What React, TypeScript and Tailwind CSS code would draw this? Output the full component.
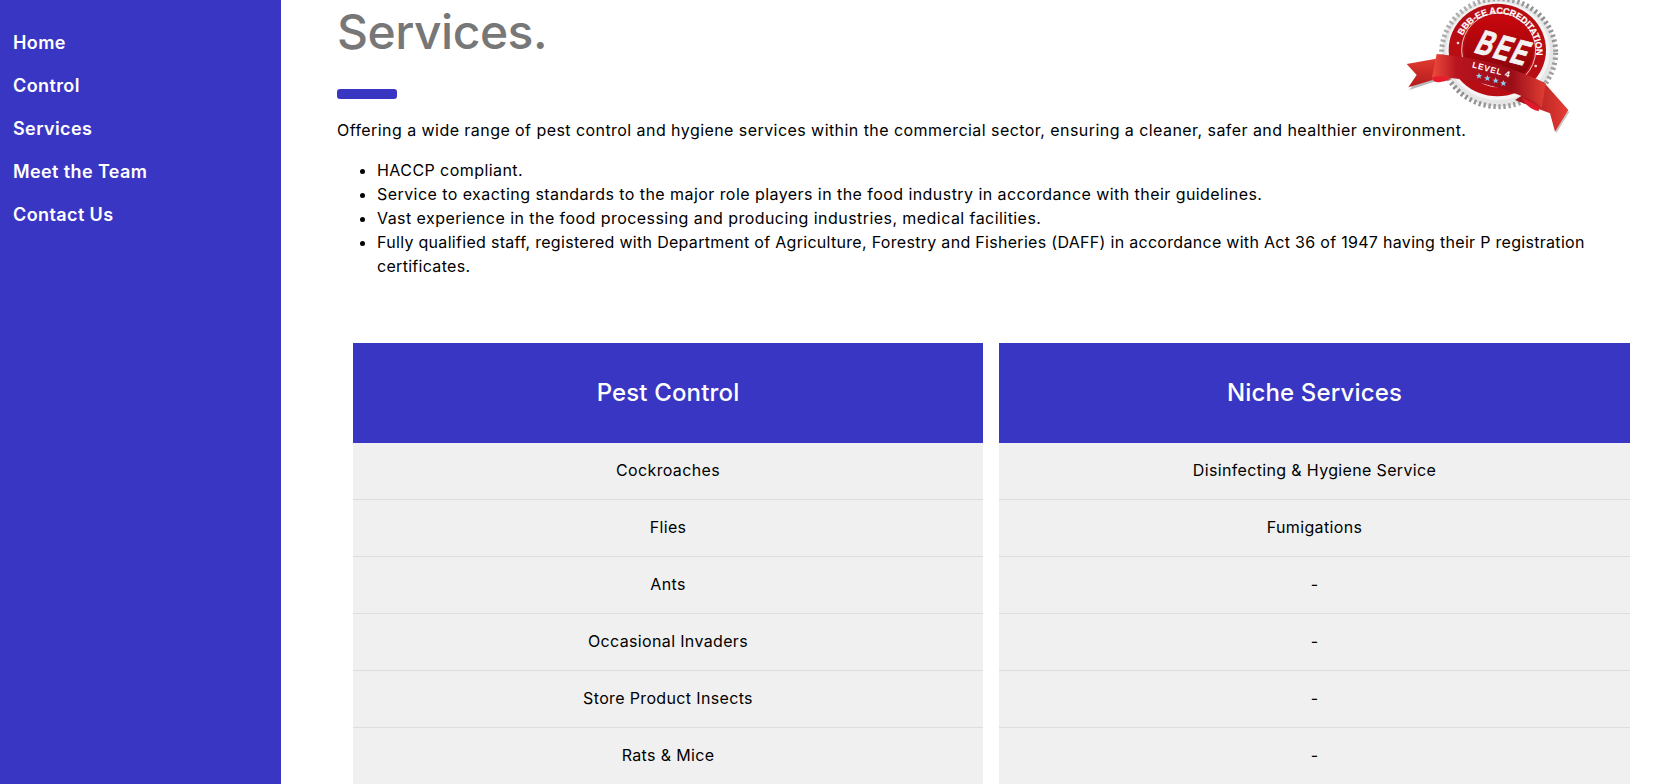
const navItems = ['Home', 'Control', 'Services', 'Meet the Team', 'Contact Us'];

const bullets = [
  { text: 'HACCP compliant.', cls: 'tracking-[0.44px]' },
  { text: 'Service to exacting standards to the major role players in the food industry in accordance with their guidelines.', cls: 'tracking-[0.44px]' },
  { text: 'Vast experience in the food processing and producing industries, medical facilities.', cls: 'tracking-[0.44px]' },
  { text: 'Fully qualified staff, registered with Department of Agriculture, Forestry and Fisheries (DAFF) in accordance with Act 36 of 1947 having their P registration certificates.', cls: 'tracking-[0.3px]' },
];

const columns = [
  { title: 'Pest Control', rows: ['Cockroaches', 'Flies', 'Ants', 'Occasional Invaders', 'Store Product Insects', 'Rats & Mice'] },
  { title: 'Niche Services', rows: ['Disinfecting & Hygiene Service', 'Fumigations', '-', '-', '-', '-'] },
];

function Star({ x, y }: { x: number; y: number }) {
  return (
    <polygon
      transform={`translate(${x} ${y}) scale(10)`}
      points="0,-1 0.28,-0.31 0.95,-0.31 0.4,0.12 0.59,0.81 0,0.4 -0.59,0.81 -0.4,0.12 -0.95,-0.31 -0.28,-0.31"
      fill="#8fd0f0"
    />
  );
}

function BeeBadge() {
  return (
    <svg viewBox="0 0 660 435" className="absolute left-[1380px] top-0 h-[145px] w-[220px]">
      <defs>
        <linearGradient id="silver" x1="0" y1="0" x2="1" y2="1">
          <stop offset="0" stopColor="#bdbdbd" />
          <stop offset="0.5" stopColor="#8c8c8c" />
          <stop offset="1" stopColor="#a8a8a8" />
        </linearGradient>
        <linearGradient id="disc" x1="0" y1="0" x2="0" y2="1">
          <stop offset="0" stopColor="#c9060d" />
          <stop offset="0.55" stopColor="#a5060c" />
          <stop offset="1" stopColor="#6e0208" />
        </linearGradient>
        <linearGradient id="band" x1="0" y1="0" x2="1" y2="0">
          <stop offset="0" stopColor="#ee4c3d" />
          <stop offset="0.22" stopColor="#b8141f" />
          <stop offset="0.7" stopColor="#9a0d19" />
          <stop offset="1" stopColor="#e23e33" />
        </linearGradient>
        <linearGradient id="tail" x1="0" y1="0" x2="1" y2="0">
          <stop offset="0" stopColor="#9c1019" />
          <stop offset="1" stopColor="#e53e33" />
        </linearGradient>
        <linearGradient id="tailLeft" x1="0" y1="0" x2="0" y2="1">
          <stop offset="0" stopColor="#e03a30" />
          <stop offset="1" stopColor="#b31a1c" />
        </linearGradient>
        <path id="arc" d="M 248 107 A 116 116 0 0 1 468 170" fill="none" />
      </defs>

      {/* teeth: a dashed ring, with the pale band inside it */}
      <ellipse cx="356" cy="158" rx="171" ry="162" fill="#e6e6e6" />
      <ellipse cx="356" cy="158" rx="171" ry="162" fill="none" stroke="url(#silver)" strokeWidth="15" strokeDasharray="7 8" />
      <ellipse cx="354" cy="153" rx="155" ry="147" fill="#f4f4f4" />
      <ellipse cx="352" cy="150" rx="146" ry="139" fill="#b90d14" />
      <circle cx="356" cy="150" r="111" fill="none" stroke="#f0c8c8" strokeWidth="3" />
      <circle cx="356" cy="150" r="104" fill="url(#disc)" />

      <text fontFamily="'Liberation Sans', sans-serif" fontWeight="700" fontSize="27" fill="#ffffff" stroke="#ffffff" strokeWidth="0.6">
        <textPath href="#arc" textLength="322" lengthAdjust="spacing">BBB-EE ACCREDITATION</textPath>
      </text>
      <circle cx="234" cy="129" r="4" fill="#f5dede" />
      <circle cx="467" cy="198" r="4" fill="#f5dede" />

      <text
        transform="translate(278 156) rotate(15) skewX(-12) scale(0.9 1.35)"
        fontFamily="'Liberation Sans', sans-serif"
        fontWeight="700"
        fontSize="78"
        fill="#f2f2f2"
        stroke="#f2f2f2"
        strokeWidth="2"
        letterSpacing="7"
      >
        BEE
      </text>

      <polygon points="84,196 170,178 160,246 88,270 118,230" fill="#8a8a8a" opacity="0.6" />
      <polygon points="80,192 168,176 158,240 85,262 110,225" fill="url(#tailLeft)" />
      <polygon points="529,400 569,334 514,345" fill="#8a8a8a" opacity="0.5" />
      <polygon points="490,245 565,330 525,395 510,340 405,300" fill="url(#tail)" />
      <path d="M 170 162 Q 270 170 360 195 Q 440 222 497 250 L 485 325 Q 470 300 380 272 Q 290 240 212 234 Q 180 232 155 236 Z" fill="url(#band)" />
      <path d="M 157 232 Q 185 224 212 236 Q 185 252 160 244 Z" fill="#e81c2c" />
      <path d="M 425 292 Q 455 305 478 322 L 476 334 Q 440 325 425 292 Z" fill="#e01a2a" />

      <text
        transform="translate(275 202) rotate(15)"
        fontFamily="'Liberation Sans', sans-serif"
        fontWeight="700"
        fontSize="25"
        fill="#ffffff"
        letterSpacing="2.5"
      >
        LEVEL 4
      </text>
      <Star x={297} y={228} />
      <Star x={322} y={235} />
      <Star x={347} y={242} />
      <Star x={370} y={250} />
    </svg>
  );
}

export default function App() {
  return (
    <div className="relative flex h-[784px] w-full overflow-hidden bg-white font-['Inter',sans-serif] text-black">
      <aside className="flex w-[281px] shrink-0 flex-col gap-[18px] bg-[#3936c4] px-[13px] pt-[30px]">
        {navItems.map((item) => (
          <a key={item} className="text-[18px] leading-[25px] font-semibold tracking-[0.4px] text-white">
            {item}
          </a>
        ))}
      </aside>

      <main className="flex-1 pl-[56px] pr-[28px]">
        <h1 className="mt-[2px] text-[48px] leading-[60px] font-medium tracking-[-0.5px] text-[#777777]">Services.</h1>
        <div className="mt-[27px] h-[10px] w-[60px] rounded-[3px] bg-[#3936c4]" />
        <p className="mt-[19px] text-[16px] leading-[24px] tracking-[0.44px]">
          Offering a wide range of pest control and hygiene services within the commercial sector, ensuring a cleaner, safer and healthier environment.
        </p>
        <ul className="mt-[16px] list-disc pl-[40px] text-[16px] leading-[24px]">
          {bullets.map((b) => (
            <li key={b.text} className={b.cls}>{b.text}</li>
          ))}
        </ul>

        <div className="mt-[65px] ml-[16px] grid grid-cols-[630px_1fr] gap-[16px]">
          {columns.map((col) => (
            <div key={col.title}>
              <div className="flex h-[100px] items-center justify-center bg-[#3936c4] pb-[1px] text-[24px] font-medium tracking-[0.15px] text-white">
                {col.title}
              </div>
              {col.rows.map((row, i) => (
                <div
                  key={i}
                  className="flex h-[57px] items-center justify-center border-b border-[#dddddd] bg-[#f0f0f0] pb-[2px] text-[16px] tracking-[0.35px]"
                >
                  {row}
                </div>
              ))}
            </div>
          ))}
        </div>
      </main>

      <BeeBadge />
    </div>
  );
}
